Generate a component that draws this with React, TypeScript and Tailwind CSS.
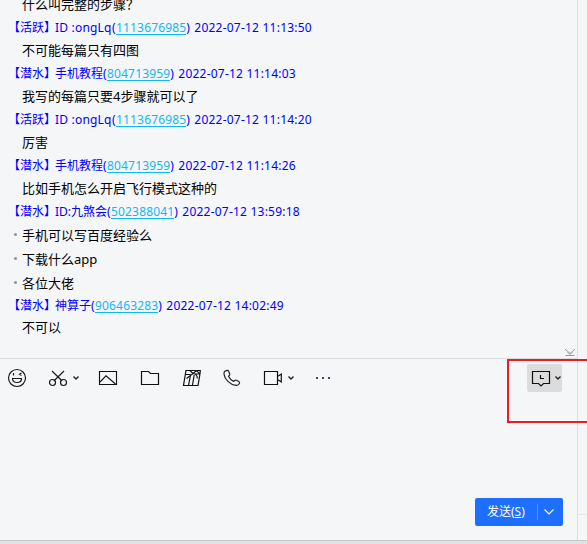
import React from "react";

type Message = {
  tag?: string;
  name?: string;
  id?: string;
  time?: string;
  text?: string;
  bullet?: boolean;
  height: string;
};

const messages: Message[] = [
  { text: "什么叫完整的步骤？", height: "h-[23px]" },
  { tag: "活跃", name: "ID :ongLq", id: "1113676985", time: "2022-07-12 11:13:50", height: "h-[23px]" },
  { text: "不可能每篇只有四图", height: "h-[23px]" },
  { tag: "潜水", name: "手机教程", id: "804713959", time: "2022-07-12 11:14:03", height: "h-[23px]" },
  { text: "我写的每篇只要4步骤就可以了", height: "h-[23px]" },
  { tag: "活跃", name: "ID :ongLq", id: "1113676985", time: "2022-07-12 11:14:20", height: "h-[23px]" },
  { text: "厉害", height: "h-[23px]" },
  { tag: "潜水", name: "手机教程", id: "804713959", time: "2022-07-12 11:14:26", height: "h-[23px]" },
  { text: "比如手机怎么开启飞行模式这种的", height: "h-[23px]" },
  { tag: "潜水", name: "ID:九煞会", id: "502388041", time: "2022-07-12 13:59:18", height: "h-[23px]" },
  { text: "手机可以写百度经验么", bullet: true, height: "h-6" },
  { text: "下载什么app", bullet: true, height: "h-6" },
  { text: "各位大佬", bullet: true, height: "h-6" },
  { tag: "潜水", name: "神算子", id: "906463283", time: "2022-07-12 14:02:49", height: "h-[22px]" },
  { text: "不可以", height: "h-[21px]" },
];

function Row({ m }: { m: Message }) {
  if (m.tag) {
    const latin = m.name!.startsWith("ID :");
    const mixed = m.name!.startsWith("ID:");
    return (
      <div className={`flex shrink-0 items-center pl-2 text-[12px] leading-none text-[#0000ff] ${m.height}`}>
        <span className="w-[47px] shrink-0">【{m.tag}】</span>
        <span className={latin ? "w-[57px] tracking-[0.2px]" : mixed ? "w-[52px]" : ""}>{m.name}</span>
        <span className="w-1">(</span>
        <span className="-mb-px border-b border-[#12b7f5] leading-[12px] tracking-[0.17px] text-[#12b7f5]">{m.id}</span>
        <span className="w-2">)</span>
        <span className="tracking-[0.22px]">{m.time}</span>
      </div>
    );
  }
  return (
    <div className={`flex shrink-0 items-center pl-[14px] text-[13px] leading-none text-black ${m.height}`}>
      <span className="flex w-2 shrink-0">
        {m.bullet && <span className="mb-0.5 size-[3px] rounded-full bg-[#8e9599]" />}
      </span>
      <span>{m.text}</span>
    </div>
  );
}

function Chevron() {
  return (
    <svg width="6" height="4" viewBox="0 0 6 4" fill="none" stroke="#222" strokeWidth="1.4">
      <path d="M.5.5 3 3 5.5.5" />
    </svg>
  );
}

function Toolbar() {
  return (
    <div className="flex h-[38px] shrink-0 items-center pl-[7px] pr-[15px]">
      <svg className="mr-[21px]" width="20" height="20" viewBox="0 0 20 20" fill="none" stroke="#1b1b1f" strokeWidth="1.2">
        <circle cx="10" cy="10" r="8.5" />
        <path d="M5.5 10.5h9c0 3-2 4-4.5 4s-4.5-1-4.5-4ZM6.5 5v2.5M14.5 5l-2 1.3 2 1.2" />
      </svg>
      <svg className="mr-[5px]" width="20" height="20" viewBox="0 0 20 20" fill="none" stroke="#1b1b1f" strokeWidth="1.2">
        <path d="M4 3l10.2 10M16 3 5.8 13" />
        <circle cx="4.5" cy="14.5" r="3" />
        <circle cx="15.5" cy="14.5" r="3" />
      </svg>
      <Chevron />
      <svg className="ml-[19px]" width="20" height="20" viewBox="0 0 20 20" fill="none" stroke="#111" strokeWidth="1.1">
        <path d="M1.5 3.5h17v13h-17zM2 14l6-6.2 9.5 8.2" />
      </svg>
      <svg className="ml-[22px]" width="20" height="20" viewBox="0 0 20 20" fill="none" stroke="#111" strokeWidth="1.2">
        <path d="M1.5 3.5h7l2 2h8v11h-17z" />
      </svg>
      <svg className="ml-[22px]" width="20" height="20" viewBox="0 0 20 20" fill="none" stroke="#111" strokeWidth="1.2">
        <path d="M4 2.5h14.3l-.5 4.5-1.8 10.5H1.5ZM3.5 6.5h5M8.5 7l-2 10.5M12.2 7l-1.8 10.5M4.5 10.5 11 5.5c3 .3 4.3 2 4.3 5M8 2.8 11 5.5l3.5-2.8M12.5 6h5.5M14.5 2.7 18 6.2" />
      </svg>
      <svg className="ml-5" width="20" height="20" viewBox="0 0 20 20" fill="none" stroke="#222" strokeWidth="1.2" strokeLinejoin="round">
        <path d="M3.1 3.1 5 2.4c.7-.2 1.3.1 1.6.8l1.1 2.6c.2.6.1 1.1-.3 1.5l-.9.9c1.1 2.4 2.8 4.1 5.2 5.2l1-.9c.5-.4 1-.5 1.6-.2l2.5 1.2c.7.3.9.9.7 1.6-.5 1.6-1.8 2.5-3.5 2.3C7.8 16.7 2.6 11.1 2 6.1c-.2-1.3.2-2.5 1.1-3Z" />
      </svg>
      <svg className="ml-[21px] mr-[5px]" width="20" height="20" viewBox="0 0 20 20" fill="none" stroke="#111" strokeWidth="1.2">
        <path d="M1.5 3.5h13v13h-13zM14.5 8.5l3.8-2.5v8l-3.8-2.5" />
      </svg>
      <Chevron />
      <div className="ml-[22px] flex gap-1">
        <i className="size-0.5 bg-[#44445a]" />
        <i className="size-0.5 bg-[#44445a]" />
        <i className="size-0.5 bg-[#44445a]" />
      </div>
      <div className="ml-auto flex h-7 w-[35px] items-center gap-1 rounded-[2px] bg-[#dcdcdc] pl-1">
        <svg width="20" height="20" viewBox="0 0 20 20" fill="none" stroke="#111" strokeWidth="1.2">
          <path d="M1.5 3.5h17v12h-6L10 18l-2.5-2.5h-6zM9.5 7v3.5H13" />
        </svg>
        <Chevron />
      </div>
    </div>
  );
}

export default function App() {
  return (
    <div className="relative flex h-[544px] w-[587px] flex-col overflow-hidden bg-[#f5f6f8] font-['Noto_Sans','Noto_Sans_CJK_SC',sans-serif]">
      <div className="flex min-h-0 flex-1">
        <div className="flex w-[577px] shrink-0 flex-col">
          <div className="relative flex h-[358px] shrink-0 flex-col overflow-hidden whitespace-nowrap">
            <div className="-mt-[7px] flex flex-col">
              {messages.map((m, i) => (
                <Row key={i} m={m} />
              ))}
            </div>
            <svg className="absolute bottom-0 right-0" width="14" height="10" viewBox="0 0 14 10" fill="none" stroke="#999" strokeWidth="1">
              <path d="M2 1l5 4.5L12 1M2.5 7.5h9M4.5 4l2.5 2.5L9.5 4" />
            </svg>
          </div>
          <div className="h-px shrink-0 bg-[#dcdee1]" />
          <Toolbar />
          <div className="flex-1" />
          <div className="mb-[14px] mr-[14px] flex h-7 w-[88px] shrink-0 items-center self-end rounded-[2px] bg-[#1e6fff] text-[12px] text-white">
            <span className="w-[62px] pl-3 leading-none">
              发送(<span className="underline underline-offset-1">S</span>)
            </span>
            <span className="h-4 w-px bg-[#5797ff]" />
            <svg className="ml-1.5" width="10" height="6" viewBox="0 0 10 6" fill="none" stroke="white" strokeWidth="1.1">
              <path d="M.5.5 5 5 9.5.5" />
            </svg>
          </div>
        </div>
        <div className="flex flex-1 flex-col justify-end border-l border-[#dcdee1]">
          <div className="mb-[25px] h-px bg-[#e4e6e9]" />
        </div>
      </div>
      <div className="h-1 shrink-0 border-t border-[#c8c8c8] bg-[#e2e2e2]" />
      <div className="absolute left-[507px] top-[359px] h-16 w-[84px] border-2 border-[#ed1c24]" />
    </div>
  );
}
